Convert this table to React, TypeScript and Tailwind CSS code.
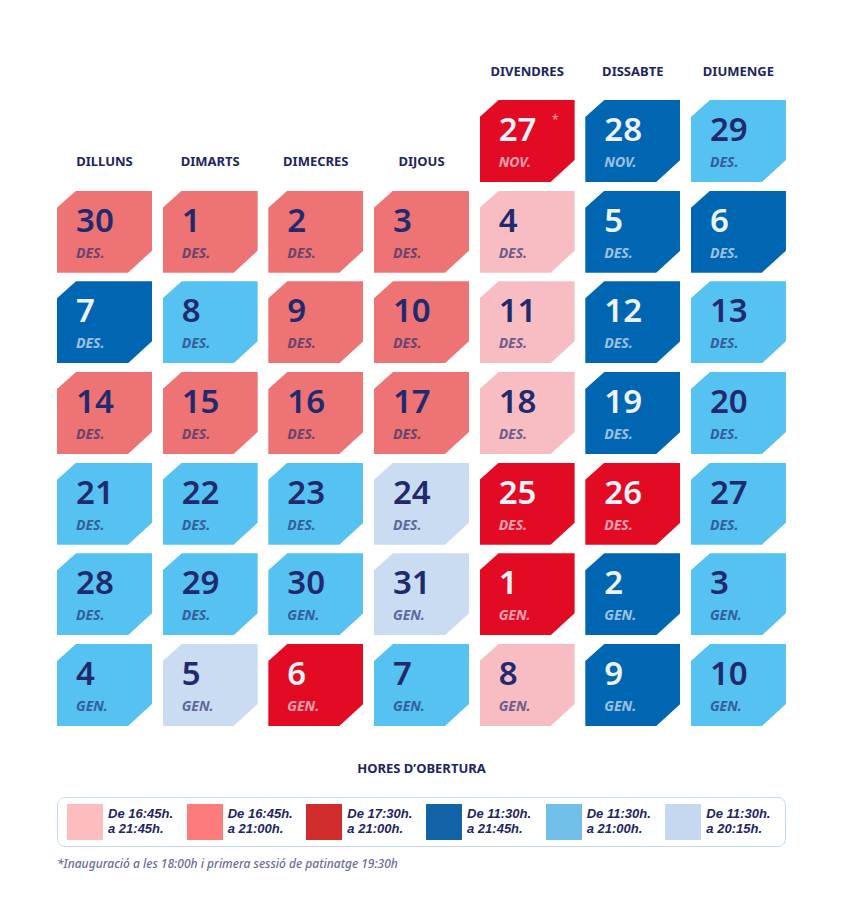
import React from 'react';

type Tone = 'salmon' | 'pink' | 'red' | 'dblue' | 'lblue' | 'pale';

type Day = { n: number; m: string; t: Tone; star?: boolean };

const tileBg: Record<Tone, string> = {
  salmon: 'bg-[#ee7374]',
  pink: 'bg-[#f7bdc2]',
  red: 'bg-[#e30a23]',
  dblue: 'bg-[#0066b2]',
  lblue: 'bg-[#56c2f1]',
  pale: 'bg-[#cadcf2]',
};

const darkTones: Tone[] = ['red', 'dblue'];

const rows: Day[][] = [
  [
    { n: 30, m: 'DES.', t: 'salmon' },
    { n: 1, m: 'DES.', t: 'salmon' },
    { n: 2, m: 'DES.', t: 'salmon' },
    { n: 3, m: 'DES.', t: 'salmon' },
    { n: 4, m: 'DES.', t: 'pink' },
    { n: 5, m: 'DES.', t: 'dblue' },
    { n: 6, m: 'DES.', t: 'dblue' },
  ],
  [
    { n: 7, m: 'DES.', t: 'dblue' },
    { n: 8, m: 'DES.', t: 'lblue' },
    { n: 9, m: 'DES.', t: 'salmon' },
    { n: 10, m: 'DES.', t: 'salmon' },
    { n: 11, m: 'DES.', t: 'pink' },
    { n: 12, m: 'DES.', t: 'dblue' },
    { n: 13, m: 'DES.', t: 'lblue' },
  ],
  [
    { n: 14, m: 'DES.', t: 'salmon' },
    { n: 15, m: 'DES.', t: 'salmon' },
    { n: 16, m: 'DES.', t: 'salmon' },
    { n: 17, m: 'DES.', t: 'salmon' },
    { n: 18, m: 'DES.', t: 'pink' },
    { n: 19, m: 'DES.', t: 'dblue' },
    { n: 20, m: 'DES.', t: 'lblue' },
  ],
  [
    { n: 21, m: 'DES.', t: 'lblue' },
    { n: 22, m: 'DES.', t: 'lblue' },
    { n: 23, m: 'DES.', t: 'lblue' },
    { n: 24, m: 'DES.', t: 'pale' },
    { n: 25, m: 'DES.', t: 'red' },
    { n: 26, m: 'DES.', t: 'red' },
    { n: 27, m: 'DES.', t: 'lblue' },
  ],
  [
    { n: 28, m: 'DES.', t: 'lblue' },
    { n: 29, m: 'DES.', t: 'lblue' },
    { n: 30, m: 'GEN.', t: 'lblue' },
    { n: 31, m: 'GEN.', t: 'pale' },
    { n: 1, m: 'GEN.', t: 'red' },
    { n: 2, m: 'GEN.', t: 'dblue' },
    { n: 3, m: 'GEN.', t: 'lblue' },
  ],
  [
    { n: 4, m: 'GEN.', t: 'lblue' },
    { n: 5, m: 'GEN.', t: 'pale' },
    { n: 6, m: 'GEN.', t: 'red' },
    { n: 7, m: 'GEN.', t: 'lblue' },
    { n: 8, m: 'GEN.', t: 'pink' },
    { n: 9, m: 'GEN.', t: 'dblue' },
    { n: 10, m: 'GEN.', t: 'lblue' },
  ],
];

const firstWeek: Day[] = [
  { n: 27, m: 'NOV.', t: 'red', star: true },
  { n: 28, m: 'NOV.', t: 'dblue' },
  { n: 29, m: 'DES.', t: 'lblue' },
];

const legend = [
  { c: 'bg-[#fdbcbd]', from: '16:45h.', to: '21:45h.' },
  { c: 'bg-[#fe7b7b]', from: '16:45h.', to: '21:00h.' },
  { c: 'bg-[#d22d2d]', from: '17:30h.', to: '21:00h.' },
  { c: 'bg-[#1263a8]', from: '11:30h.', to: '21:45h.' },
  { c: 'bg-[#72c0e9]', from: '11:30h.', to: '21:00h.' },
  { c: 'bg-[#c6d8ef]', from: '11:30h.', to: '20:15h.' },
];

function Tile({ day }: { day: Day }) {
  const dark = darkTones.includes(day.t);
  const ink = dark ? 'text-[#eef3fa]' : 'text-[#222a6e]';
  return (
    <div
      className={`relative h-[82px] w-[95px] pl-[19px] pt-[11px] [clip-path:polygon(19px_0,95px_0,95px_60px,71px_82px,0_82px,0_17px)] ${tileBg[day.t]}`}
    >
      <div className={`text-[33px] leading-[36px] font-semibold ${ink}`}>{day.n}</div>
      <div className={`mt-[7px] text-[14px] leading-[16px] font-bold italic opacity-65 ${ink}`}>{day.m}</div>
      {day.star && (
        <span className="absolute right-[16px] top-[14px] text-[12px] leading-none text-[#f6a5b0]">*</span>
      )}
    </div>
  );
}

function DayLabel({ name }: { name: string }) {
  return <div className="h-[18px] text-center text-[13px] leading-[18px] font-bold text-[#1d2562]">{name}</div>;
}

export default function App() {
  return (
    <div className="min-h-[909px] w-[843px] bg-white pl-[57px] pt-[62px] font-['Noto_Sans',sans-serif]">
      <div className="grid w-[729px] grid-cols-[repeat(7,95px)] gap-x-[10.67px] mb-[20px]">
        <div />
        <div />
        <div />
        <div />
        <DayLabel name="DIVENDRES" />
        <DayLabel name="DISSABTE" />
        <DayLabel name="DIUMENGE" />
      </div>

      <div className="grid w-[729px] grid-cols-[repeat(7,95px)] gap-x-[10.67px] gap-y-[8.67px]">
        {['DILLUNS', 'DIMARTS', 'DIMECRES', 'DIJOUS'].map((d) => (
          <div key={d} className="flex h-[82px] flex-col justify-end pb-[12px]">
            <DayLabel name={d} />
          </div>
        ))}
        {firstWeek.map((d, i) => (
          <Tile key={`f${i}`} day={d} />
        ))}
        {rows.flat().map((d, i) => (
          <Tile key={i} day={d} />
        ))}
      </div>

      <div className="mt-[33px] w-[729px] text-center text-[13px] leading-[18px] font-bold text-[#1d2562]">
        HORES D’OBERTURA
      </div>

      <div className="mt-[20px] flex h-[50px] w-[729px] items-center rounded-[8px] border-[1.5px] border-[#c9dbf3] pl-[9px]">
        {legend.map((l, i) => (
          <div key={i} className="flex w-[120px] items-center gap-[5px]">
            <div className={`h-[36px] w-[36px] shrink-0 ${l.c}`} />
            <p className="font-['Liberation_Sans',sans-serif] text-[13px] leading-[14.6px] font-bold italic text-[#1d2562]">
              De {l.from}
              <br />a {l.to}
            </p>
          </div>
        ))}
      </div>

      <div className="mt-[9px] text-[12px] leading-[16px] font-medium italic text-[#6b6c9c]">
        *Inauguració a les 18:00h i primera sessió de patinatge 19:30h
      </div>
    </div>
  );
}
